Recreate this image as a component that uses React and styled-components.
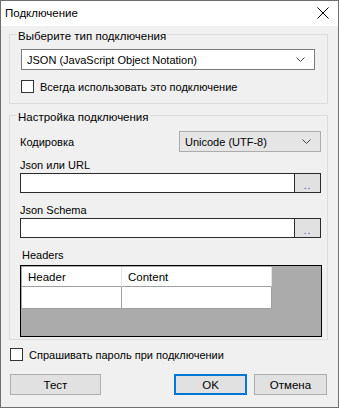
import React from "react";
import styled, { createGlobalStyle } from "styled-components";

const Global = createGlobalStyle`
  html, body { margin: 0; padding: 0; background: #f0f0f0; }
  body { font-family: "Liberation Sans", Arial, sans-serif; font-size: 11px; color: #000; }
  * { box-sizing: border-box; }
`;

const Window = styled.div`
  width: 339px;
  height: 408px;
  border: 1px solid #6f6f6f;
  background: #f0f0f0;
  display: flex;
  flex-direction: column;
`;

const TitleBar = styled.div`
  height: 25px;
  background: #fff;
  display: flex;
  align-items: center;
  justify-content: space-between;
  padding: 0 9px 1px 4px;
  font-size: 11.5px;
`;

const CloseIcon = styled.svg`
  width: 12px;
  height: 12px;
  display: block;
`;

const Body = styled.div`
  flex: 1;
  display: flex;
  flex-direction: column;
  padding: 0 10px 0 8px;
`;

const Group = styled.div`
  border: 1px solid #dcdcdc;
  margin-top: ${(p) => p.$top}px;
  padding: 0 ${(p) => p.$pr}px ${(p) => p.$pb}px ${(p) => p.$pl}px;
  display: flex;
  flex-direction: column;
`;

const Legend = styled.div`
  align-self: flex-start;
  margin: -7px 0 0 ${(p) => p.$ml}px;
  padding: 0 1px;
  background: #f0f0f0;
  line-height: 16px;
  font-size: 11.5px;
`;

const Select = styled.div`
  height: 21px;
  border: 1px solid ${(p) => (p.$gray ? "#acacac" : "#7a7a7a")};
  background: ${(p) => (p.$gray ? "#e5e5e5" : "#fff")};
  display: flex;
  align-items: center;
  justify-content: space-between;
  padding: 0 9px 0 5px;
  margin-top: ${(p) => p.$top || 0}px;
  width: ${(p) => (p.$w ? p.$w + "px" : "auto")};
`;

const Chevron = () => (
  <svg width="9" height="5" viewBox="0 0 9 5" style={{ display: "block" }}>
    <path d="M0.5 0.5 L4.5 4.5 L8.5 0.5" fill="none" stroke="#444" strokeWidth="1" />
  </svg>
);

const CheckRow = styled.label`
  display: flex;
  align-items: center;
  gap: 6px;
  margin-top: ${(p) => p.$top}px;
  margin-left: ${(p) => p.$ml || 0}px;
  height: 13px;
  line-height: 16px;
`;

const Box = styled.span`
  width: 13px;
  height: 13px;
  border: 1px solid #333;
  background: #fff;
  flex: none;
`;

const Row = styled.div`
  display: flex;
  align-items: center;
  justify-content: space-between;
  margin-top: ${(p) => p.$top}px;
`;

const FieldLabel = styled.div`
  line-height: 16px;
  margin-top: ${(p) => p.$top}px;
  margin-left: ${(p) => p.$ml || 0}px;
`;

const InputRow = styled.div`
  display: flex;
  height: 20px;
`;

const Input = styled.div`
  flex: 1;
  background: #fff;
  border: 1px solid #2b2b2b;
`;

const DotsButton = styled.div`
  width: 27px;
  margin-left: -1px;
  background: #e1e1e1;
  border: 1px solid #2b2b2b;
  display: flex;
  align-items: flex-end;
  justify-content: center;
  font-size: 10px;
  line-height: 12px;
  color: #3b3bb0;
  letter-spacing: 1px;
`;

const Grid = styled.div`
  margin-top: 2px;
  margin-right: -1px;
  height: 72px;
  border: 1px solid #000;
  background: #ababab;
  padding: 1px;
`;

const GridTable = styled.div`
  width: 250px;
  display: grid;
  grid-template-columns: 100px 150px;
`;

const Cell = styled.div`
  background: #fff;
  height: ${(p) => (p.$head ? 20 : 22)}px;
  border-right: 1px solid ${(p) => (p.$head ? "#e3e3e3" : "#a0a0a0")};
  border-bottom: 1px solid #a0a0a0;
  padding-left: 6px;
  display: flex;
  align-items: center;
  font-size: 11.5px;
`;

const ButtonBar = styled.div`
  display: flex;
  margin-top: 13px;
  margin-left: 1px;
  font-size: 11.5px;
`;

const Button = styled.div`
  width: ${(p) => p.$w}px;
  height: 21px;
  margin-left: ${(p) => p.$ml || 0}px;
  background: #e1e1e1;
  border: ${(p) => (p.$primary ? "2px solid #0078d7" : "1px solid #adadad")};
  display: flex;
  align-items: center;
  justify-content: center;
`;

export default function App() {
  return (
    <>
      <Global />
      <Window>
        <TitleBar>
          <span>Подключение</span>
          <CloseIcon viewBox="0 0 12 12">
            <path d="M0.5 0.5 L11.5 11.5 M11.5 0.5 L0.5 11.5" stroke="#000" strokeWidth="1" />
          </CloseIcon>
        </TitleBar>
        <Body>
          <Group $top={8} $pl={11} $pr={12} $pb={10}>
            <Legend $ml={-4}>Выберите тип подключения</Legend>
            <Select $top={5}>
              <span>JSON (JavaScript Object Notation)</span>
              <Chevron />
            </Select>
            <CheckRow $top={10}>
              <Box />
              <span>Всегда использовать это подключение</span>
            </CheckRow>
          </Group>

          <Group $top={11} $pl={10} $pr={6} $pb={2}>
            <Legend $ml={-3}>Настройка подключения</Legend>
            <Row $top={6}>
              <span>Кодировка</span>
              <Select $gray $w={142}>
                <span>Unicode (UTF-8)</span>
                <Chevron />
              </Select>
            </Row>
            <FieldLabel $top={5}>Json или URL</FieldLabel>
            <InputRow>
              <Input />
              <DotsButton>..</DotsButton>
            </InputRow>
            <FieldLabel $top={9}>Json Schema</FieldLabel>
            <InputRow>
              <Input />
              <DotsButton>..</DotsButton>
            </InputRow>
            <FieldLabel $top={9} $ml={2}>Headers</FieldLabel>
            <Grid>
              <GridTable>
                <Cell $head>Header</Cell>
                <Cell $head>Content</Cell>
                <Cell />
                <Cell />
              </GridTable>
            </Grid>
          </Group>

          <CheckRow $top={8} $ml={1}>
            <Box />
            <span>Спрашивать пароль при подключении</span>
          </CheckRow>

          <ButtonBar>
            <Button $w={91}>Тест</Button>
            <Button $w={73} $ml={73} $primary>OK</Button>
            <Button $w={73} $ml={7}>Отмена</Button>
          </ButtonBar>
        </Body>
      </Window>
    </>
  );
}
